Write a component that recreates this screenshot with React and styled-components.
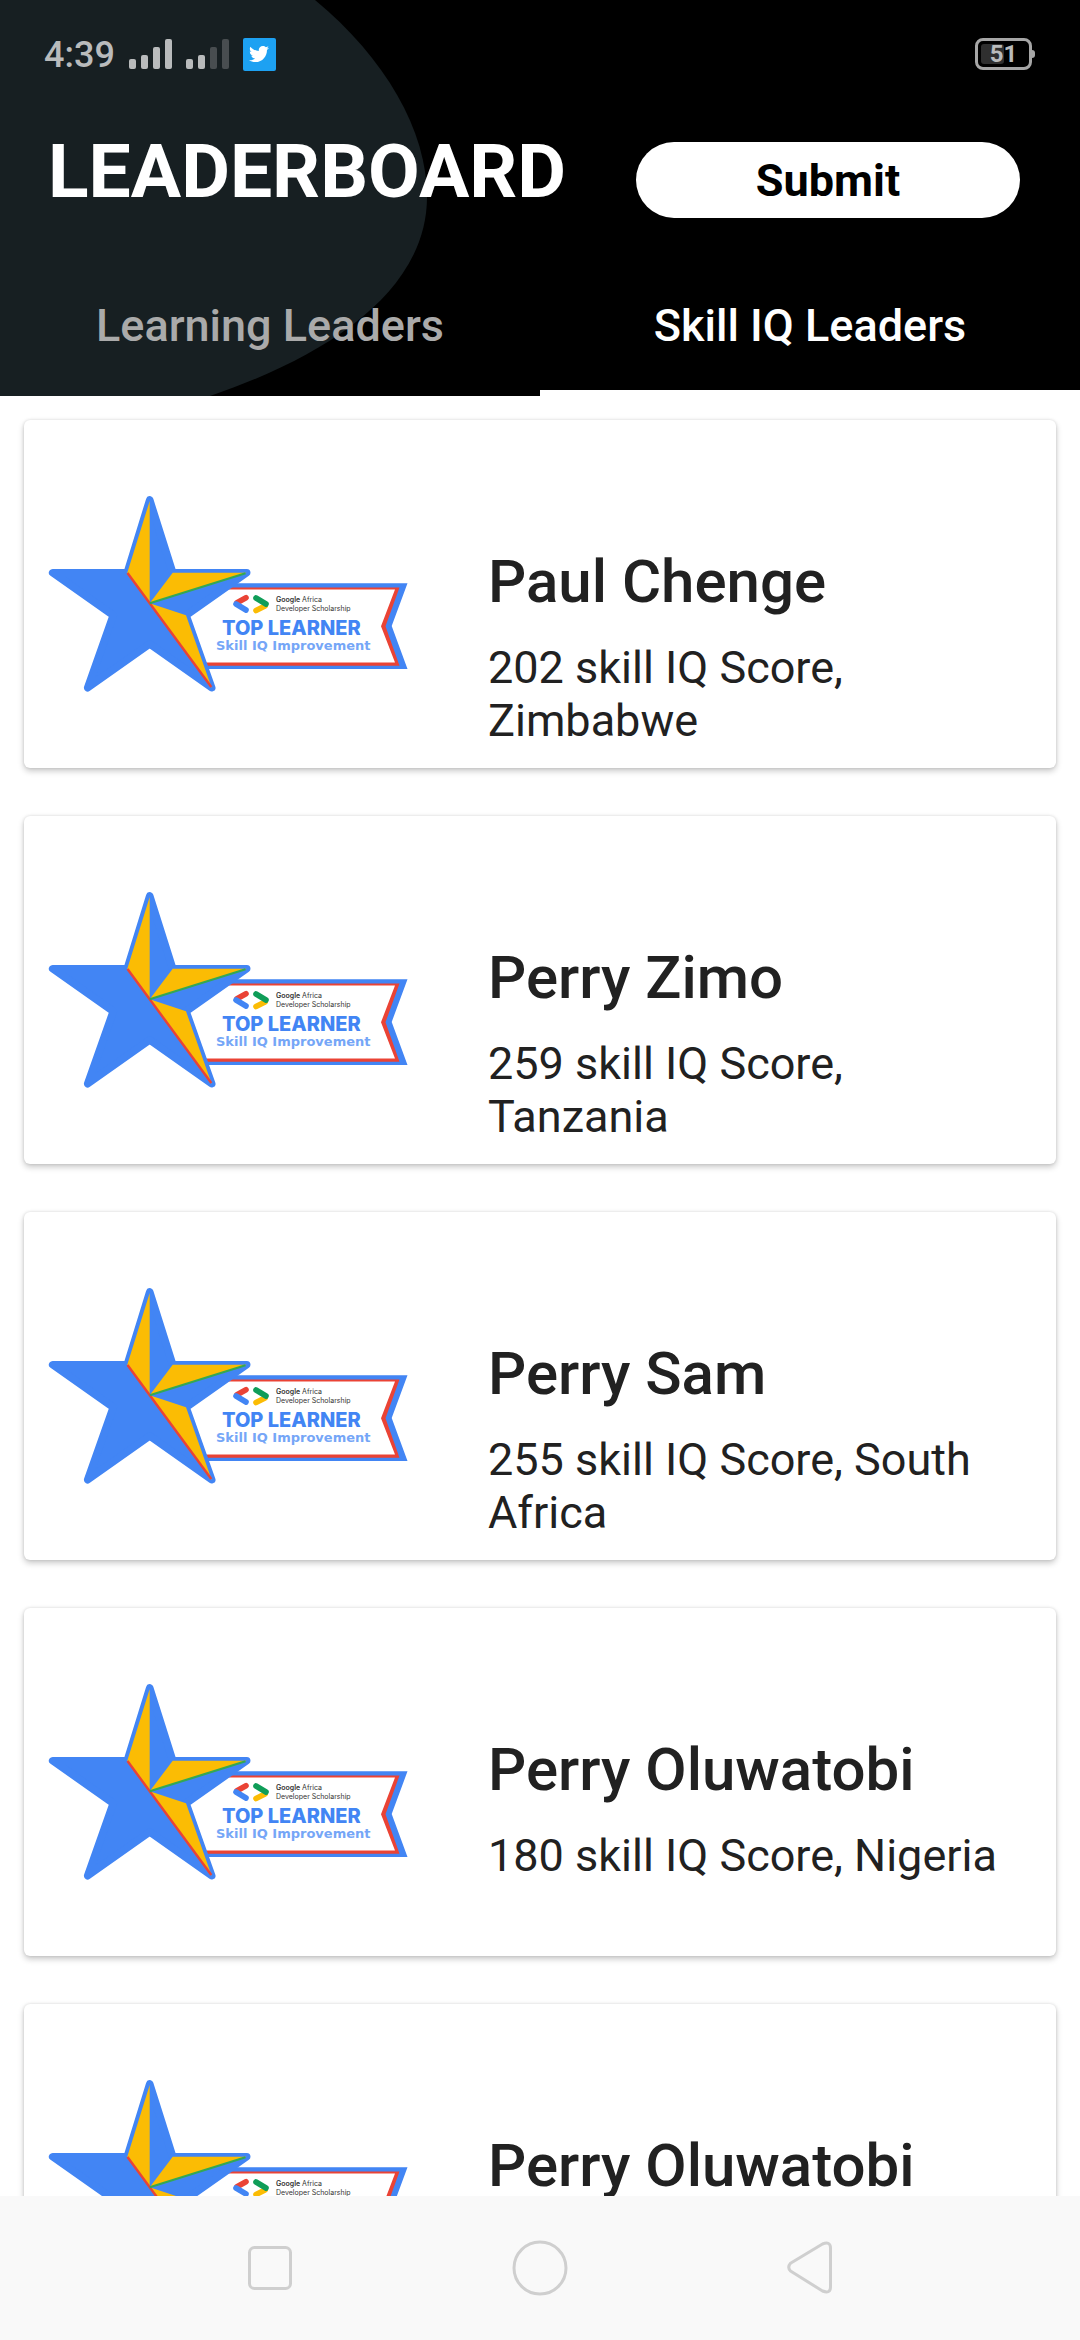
import React from "react";
import styled, { createGlobalStyle } from "styled-components";
import { FaTwitter } from "react-icons/fa";

const GlobalStyle = createGlobalStyle`
  * { box-sizing: border-box; }
  body { margin: 0; background: #fff; font-family: Roboto, sans-serif; color: #212121; }
  button { font: inherit; border: 0; padding: 0; background: none; cursor: pointer; }
`;

const Screen = styled.div`
  display: flex;
  flex-direction: column;
  height: 100vh;
  overflow: hidden;
`;

const Header = styled.header`
  position: relative;
  flex: none;
  background: #000;
`;

const Backdrop = styled.svg`
  position: absolute;
  top: 0;
  left: 0;
  width: 428px;
  height: 396px;
`;

const StatusBar = styled.div`
  position: relative;
  display: flex;
  align-items: center;
  justify-content: space-between;
  height: 108px;
  padding: 0 44px;
  color: #b9bbbc;
`;

const StatusGroup = styled.div`
  display: flex;
  align-items: center;
  gap: 14px;
`;

const Clock = styled.span`
  padding-top: 2px;
  font-size: 36px;
  line-height: 42px;
  font-weight: 500;
`;

const Signal = styled.span`
  display: flex;
  align-items: flex-end;
  gap: 5px;
  height: 30px;
`;

const SignalBar = styled.i`
  width: 7px;
  height: ${(p) => p.$height}px;
  border-radius: 2px;
  background: ${(p) => (p.$on ? "#b9bbbc" : "#484d50")};
`;

const TwitterTile = styled.span`
  display: flex;
  align-items: center;
  justify-content: center;
  width: 33px;
  height: 33px;
  border-radius: 2px;
  background: #1da1f2;
  color: #fff;
  font-size: 20px;
`;

const Battery = styled.span`
  position: relative;
  display: flex;
  align-items: center;
  justify-content: center;
  width: 57px;
  height: 32px;
  border: 3px solid #a6a6a6;
  border-radius: 8px;
  font-size: 24px;
  line-height: 28px;
  font-weight: 700;
  margin-right: 4px;

  &::before {
    content: "";
    position: absolute;
    left: 3px;
    top: 3px;
    bottom: 3px;
    width: 23px;
    border-radius: 3px;
    background: #2f2f2f;
  }

  &::after {
    content: "";
    position: absolute;
    right: -6px;
    top: 9px;
    width: 3px;
    height: 8px;
    border-radius: 0 3px 3px 0;
    background: #a6a6a6;
  }
`;

const BatteryLevel = styled.span`
  position: relative;
`;

const TitleRow = styled.div`
  position: relative;
  display: flex;
  align-items: center;
  justify-content: space-between;
  height: 144px;
  padding: 0 60px 0 48px;
`;

const Title = styled.h1`
  margin: 0;
  padding-bottom: 18px;
  font-size: 75px;
  line-height: 88px;
  font-weight: 700;
  color: #fff;
`;

const SubmitButton = styled.button`
  && {
    width: 384px;
    height: 76px;
    border-radius: 38px;
    background: #fff;
    color: #000;
    font-size: 45px;
    line-height: 53px;
    font-weight: 700;
  }
`;

const Tabs = styled.nav`
  position: relative;
  display: flex;
`;

const Tab = styled.button`
  && {
    flex: 1;
    height: 144px;
    padding-top: 8px;
    border-bottom: 6px solid ${(p) => (p.$active ? "#fff" : "transparent")};
    color: ${(p) => (p.$active ? "#fff" : "#aaa")};
    font-size: 45px;
    line-height: 53px;
    font-weight: 500;
  }
`;

const List = styled.ul`
  flex: 1;
  min-height: 0;
  margin: 0;
  padding: 24px;
  overflow-y: auto;
  scrollbar-width: none;
  list-style: none;
`;

const Card = styled.li`
  display: flex;
  gap: 80px;
  min-height: 348px;
  margin-bottom: 48px;
  padding: 0 48px 20px 24px;
  border-radius: 6px;
  background: #fff;
  box-shadow: 0 3px 6px rgba(0, 0, 0, 0.22), 0 0 3px rgba(0, 0, 0, 0.12);
`;

const BadgeArt = styled.svg`
  flex: none;
  align-self: center;
  width: 360px;
  height: 196px;
  margin-top: 20px;
  font-family: Inter, sans-serif;
`;

const Details = styled.div`
  flex: 1;
  min-width: 0;
  padding-top: 127px;
`;

const Name = styled.h2`
  margin: 0 0 24px;
  font-size: 60px;
  line-height: 70px;
  font-weight: 500;
`;

const Score = styled.p`
  margin: 0;
  font-size: 45px;
  line-height: 53px;
`;

const NavBar = styled.nav`
  flex: none;
  display: grid;
  grid-template-columns: repeat(3, 25%);
  justify-content: center;
  height: 144px;
  background: #f9f9f9;
`;

const NavButton = styled.button`
  && {
    display: flex;
    align-items: center;
    justify-content: center;
  }
`;

const BLUE = "#4285f4";
const RED = "#ea4335";
const YELLOW = "#fbbc04";
const GREEN = "#34a853";

function Badge() {
  return (
    <BadgeArt viewBox="0 0 360 196" role="img" aria-label="Top Learner, Skill IQ Improvement">
      <path d="M150 87.3H359.5L343.7 130L359.5 173H150Z" fill={BLUE} />
      <path d="M150 91.5H351.5L337.5 130.3L351.5 169.7H150Z" fill={RED} />
      <path d="M150 93.5H347L333 130.3L347 166.5H150Z" fill="#fff" />
      <path
        d="M101.7 4L124.7 76.7H198.7L138 119.3L163.7 191.7L101.7 148L39.7 191.7L65.3 119.3L4.7 76.7H79.3Z"
        fill={BLUE}
        stroke={BLUE}
        strokeWidth="7.6"
        strokeLinejoin="round"
      />
      <path d="M101.7 5V107.3L79.3 76.7Z" fill={YELLOW} />
      <path d="M124.7 76.7H198.7L101.7 107.3Z" fill={YELLOW} />
      <path d="M138 119.3L163.7 191.7L101.7 107.3Z" fill={YELLOW} />
      <path d="M79.5 77L163.3 191" stroke={RED} strokeWidth="2.4" />
      <path d="M101.7 107.3L197.5 77.3" stroke={GREEN} strokeWidth="2.2" />
      <g fill="none" strokeWidth="5.6" strokeLinecap="round">
        <path d="M198 101.7L189 106.7" stroke={RED} />
        <path d="M188 108L198 114" stroke={BLUE} />
        <path d="M217 110L208 114.5" stroke={YELLOW} />
        <path d="M208 102L218 108" stroke="#0f9d58" />
      </g>
      <text x="228" y="106" fontSize="7" fill="#333">
        <tspan fontWeight="600">Google</tspan> Africa
      </text>
      <text x="228" y="115" fontSize="7" fill="#333">Developer Scholarship</text>
      <text x="174" y="139" fontSize="20" fontWeight="800" fill={BLUE}>TOP LEARNER</text>
      <text x="168" y="154" fontSize="13" fontWeight="700" fontFamily="DejaVu Sans, sans-serif" fill="#75a6f7">Skill IQ Improvement</text>
    </BadgeArt>
  );
}

const BAR_HEIGHTS = [10, 14, 22, 30];

function SignalMeter({ level }) {
  return (
    <Signal>
      {BAR_HEIGHTS.map((height, i) => (
        <SignalBar key={height} $height={height} $on={i < level} />
      ))}
    </Signal>
  );
}

const LEADERS = [
  { name: "Paul Chenge", score: 202, country: "Zimbabwe" },
  { name: "Perry Zimo", score: 259, country: "Tanzania" },
  { name: "Perry Sam", score: 255, country: "South Africa" },
  { name: "Perry Oluwatobi", score: 180, country: "Nigeria" },
  { name: "Perry Oluwatobi", score: 180, country: "Nigeria" },
];

export default function App() {
  return (
    <>
      <GlobalStyle />
      <Screen>
        <Header>
          <Backdrop viewBox="0 0 428 396" aria-hidden="true">
            <path d="M0 0H315C385 58 427 130 427 197C427 290 330 355 210 396H0Z" fill="#171f22" />
          </Backdrop>
          <StatusBar>
            <StatusGroup>
              <Clock>4:39</Clock>
              <SignalMeter level={4} />
              <SignalMeter level={2} />
              <TwitterTile>
                <FaTwitter aria-hidden="true" />
              </TwitterTile>
            </StatusGroup>
            <Battery>
              <BatteryLevel>51</BatteryLevel>
            </Battery>
          </StatusBar>
          <TitleRow>
            <Title>LEADERBOARD</Title>
            <SubmitButton type="button">Submit</SubmitButton>
          </TitleRow>
          <Tabs>
            <Tab type="button">Learning Leaders</Tab>
            <Tab type="button" $active>Skill IQ Leaders</Tab>
          </Tabs>
        </Header>
        <List>
          {LEADERS.map((leader, i) => (
            <Card key={i}>
              <Badge />
              <Details>
                <Name>{leader.name}</Name>
                <Score>{`${leader.score} skill IQ Score, ${leader.country}`}</Score>
              </Details>
            </Card>
          ))}
        </List>
        <NavBar>
          <NavButton type="button" aria-label="Recent apps">
            <svg width="46" height="46" viewBox="0 0 46 46" fill="none" stroke="#cfcfcf" strokeWidth="3">
              <rect x="2.5" y="2.5" width="41" height="41" rx="5" />
            </svg>
          </NavButton>
          <NavButton type="button" aria-label="Home">
            <svg width="56" height="56" viewBox="0 0 56 56" fill="none" stroke="#cfcfcf" strokeWidth="3">
              <circle cx="28" cy="28" r="26" />
            </svg>
          </NavButton>
          <NavButton type="button" aria-label="Back">
            <svg width="46" height="54" viewBox="0 0 46 54" fill="none" stroke="#cfcfcf" strokeWidth="3">
              <path d="M35.5 3L3.500 22.300Q0 26.500 3.500 30L35.500 50Q43.500 53 43.500 46V7Q43.500 0 35.500 3Z" strokeLinejoin="round" />
            </svg>
          </NavButton>
        </NavBar>
      </Screen>
    </>
  );
}
